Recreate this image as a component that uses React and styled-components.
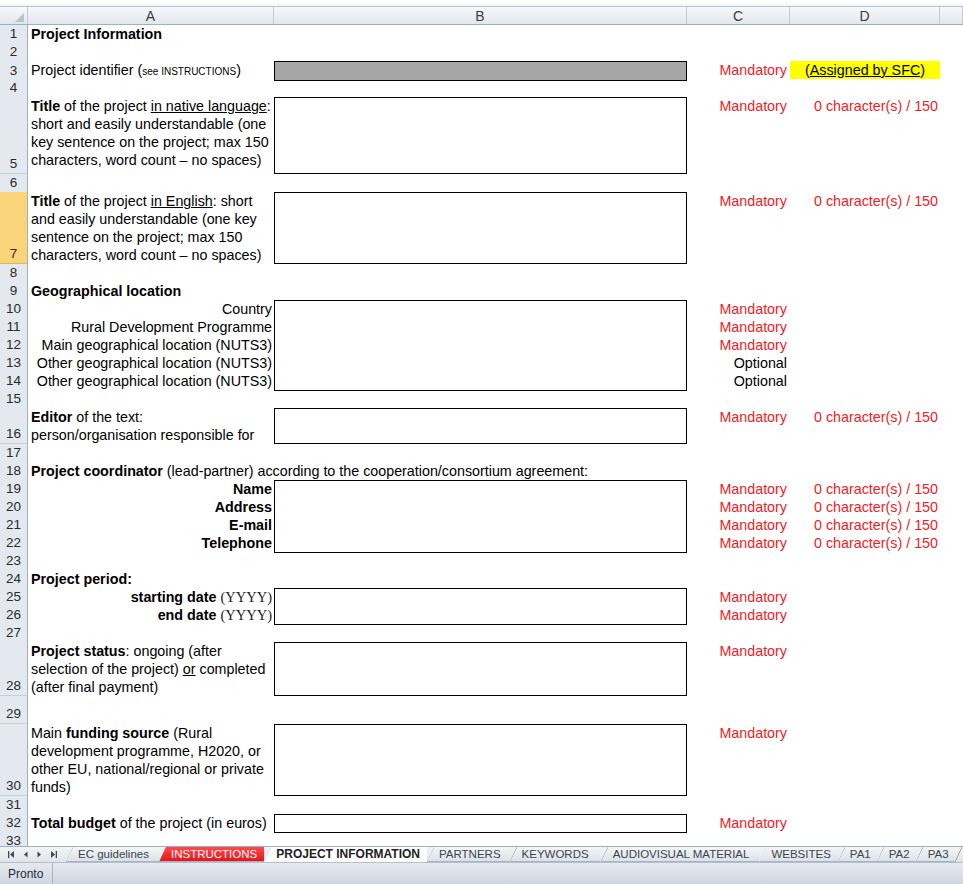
import React from "react";
import styled, { createGlobalStyle } from "styled-components";

const COLS = "28px 246px 413px 103px 150px 1fr";

const GlobalStyle = createGlobalStyle`
  *, *::before, *::after { box-sizing: border-box; }
  html, body { margin: 0; padding: 0; background: #fff; }
  body { font-family: "Liberation Sans", Arial, sans-serif; color: #000; }
`;

const Window = styled.div`
  width: 963px;
  height: 884px;
  display: flex;
  flex-direction: column;
  overflow: hidden;
  background: #fff;
`;

const FormulaEdge = styled.div`
  height: 7px;
  flex-shrink: 0;
  background: linear-gradient(#ffffff, #f3f4f6);
  border-top: 2px solid #fff;
  border-bottom: 1px solid #b9c3cf;
`;

const HeaderRow = styled.div`
  display: grid;
  grid-template-columns: ${COLS};
  height: 18px;
  flex-shrink: 0;
  background: linear-gradient(#f7f8fa, #e3e7ec);
  border-bottom: 1px solid #9eb0c4;
`;

const Corner = styled.div`
  display: flex;
  align-items: flex-end;
  justify-content: flex-end;
  padding: 0 3px 2px 0;
  border-right: 1px solid #c3cbd5;
`;

const ColLetter = styled.div`
  display: flex;
  align-items: center;
  justify-content: center;
  font-size: 14px;
  color: #3c3c3c;
  border-right: 1px solid #c3cbd5;
`;

const SheetBody = styled.div`
  flex: 1;
  overflow: hidden;
`;

const SheetRow = styled.div`
  display: grid;
  grid-template-columns: ${COLS};
  height: ${({ $h }) => $h}px;
`;

const RowNum = styled.div`
  display: flex;
  align-items: flex-end;
  justify-content: center;
  font-size: 13.5px;
  line-height: 18px;
  color: #2a2a2a;
  background: ${({ $selected }) => ($selected ? "#f9d47a" : "#e4e9ef")};
  border-right: 1px solid #9eb0c4;
  border-bottom: 1px solid ${({ $selected }) => ($selected ? "#e2b55a" : "#c6ced8")};
`;

const LabelCell = styled.div`
  font-size: 14.3px;
  line-height: 18px;
  white-space: nowrap;
  padding: 0 2px 0 3px;
  text-align: ${({ $align }) => $align || "left"};
`;

const Small = styled.span`
  font-size: 10px;
`;

const Serif = styled.span`
  font-family: "Liberation Serif", "Times New Roman", serif;
  font-size: 14.5px;
  color: #222;
`;

const Underline = styled.span`
  text-decoration: underline;
`;

const InputBox = styled.div`
  border: 1px solid #000;
  border-top: ${({ $joined }) => ($joined ? "none" : "1px solid #000")};
  background: ${({ $gray }) => ($gray ? "#a6a6a6" : "#fff")};
`;

const StatusCell = styled.div`
  font-size: 14.3px;
  line-height: 18px;
  text-align: right;
  padding-right: 3px;
  white-space: nowrap;
  color: ${({ $optional }) => ($optional ? "#000" : "#ee1c25")};
`;

const CountCell = styled.div`
  font-size: 14.3px;
  line-height: 18px;
  text-align: right;
  padding-right: 2px;
  white-space: nowrap;
  color: #ee1c25;
`;

const AssignedCell = styled.div`
  height: 18px;
  font-size: 14.3px;
  line-height: 18px;
  text-align: center;
  background: #ffff00;
  color: #000;
  white-space: nowrap;
`;

const TabBar = styled.div`
  display: flex;
  height: 16px;
  flex-shrink: 0;
  background: linear-gradient(#f2f4f7, #e1e5ea);
  border-top: 1px solid #9eb0c4;
`;

const NavGroup = styled.div`
  width: 66px;
  display: flex;
  align-items: center;
  padding-left: 4px;
`;

const NavButton = styled.div`
  width: 14px;
  display: flex;
  justify-content: center;
  align-items: center;
`;

const Tab = styled.div`
  display: flex;
  align-items: center;
  height: 15px;
  padding: 0 ${({ $gap }) => $gap || 8}px 0 12px;
  font-size: ${({ $active }) => ($active ? 12 : 11.5)}px;
  white-space: nowrap;
  font-weight: ${({ $active }) => ($active ? 700 : 400)};
  color: ${({ $red, $active }) => ($red ? "#fff" : $active ? "#222" : "#3b4450")};
  background:
    linear-gradient(to bottom right, transparent calc(50% - 0.7px), #8593a3 50%, transparent calc(50% + 0.7px)) 0 0 / 7px 100% no-repeat,
    ${({ $red, $active }) =>
      $red
        ? "linear-gradient(#ff4a4a, #e8141c)"
        : $active
        ? "#fff"
        : "linear-gradient(#f4f6f8, #dde2e8)"};
  clip-path: polygon(0 100%, 7px 0, 100% 0, 100% 100%);
  border-bottom: 1px solid ${({ $active }) => ($active ? "#fff" : "#a8b4c2")};
`;

const TabTail = styled.div`
  flex: 1;
  height: 15px;
  background: linear-gradient(to bottom right, transparent calc(50% - 0.7px), #8593a3 50%, transparent calc(50% + 0.7px)) 0 0 / 7px 100% no-repeat;
`;

const StatusBar = styled.div`
  height: 22px;
  flex-shrink: 0;
  display: flex;
  align-items: center;
  background: linear-gradient(#e6eaf0, #cfd6df);
  border-top: 1px solid #b3bfcc;
  font-size: 12px;
  color: #1f2a36;
`;

const StatusText = styled.div`
  padding: 0 9px 0 8px;
  height: 100%;
  display: flex;
  align-items: center;
  border-right: 1px solid #a9b5c3;
`;

const count = "0 character(s) / 150";

const rows = [
  { n: 1, a: <b>Project Information</b> },
  { n: 2 },
  {
    n: 3,
    a: (
      <>
        Project identifier (<Small>see INSTRUCTIONS</Small>)
      </>
    ),
    box: "gray",
    c: "Mandatory",
    assigned: true,
  },
  { n: 4 },
  {
    n: 5,
    h: 77,
    a: (
      <>
        <b>Title</b> of the project <Underline>in native language</Underline>:
        <br />
        short and easily understandable (one
        <br />
        key sentence on the project; max 150
        <br />
        characters, word count – no spaces)
      </>
    ),
    box: "white",
    c: "Mandatory",
    d: count,
  },
  { n: 6 },
  {
    n: 7,
    h: 72,
    selected: true,
    a: (
      <>
        <b>Title</b> of the project <Underline>in English</Underline>: short
        <br />
        and easily understandable (one key
        <br />
        sentence on the project; max 150
        <br />
        characters, word count – no spaces)
      </>
    ),
    box: "white",
    c: "Mandatory",
    d: count,
  },
  { n: 8 },
  { n: 9, a: <b>Geographical location</b> },
  { n: 10, a: "Country", align: "right", box: "white", c: "Mandatory" },
  { n: 11, a: "Rural Development Programme", align: "right", box: "white", joined: true, c: "Mandatory" },
  { n: 12, a: "Main geographical location (NUTS3)", align: "right", box: "white", joined: true, c: "Mandatory" },
  { n: 13, a: "Other geographical location (NUTS3)", align: "right", box: "white", joined: true, c: "Optional", optional: true },
  { n: 14, a: "Other geographical location (NUTS3)", align: "right", box: "white", joined: true, c: "Optional", optional: true },
  { n: 15 },
  {
    n: 16,
    h: 36,
    a: (
      <>
        <b>Editor</b> of the text:
        <br />
        person/organisation responsible for
      </>
    ),
    box: "white",
    c: "Mandatory",
    d: count,
  },
  { n: 17 },
  {
    n: 18,
    a: (
      <>
        <b>Project coordinator</b> (lead-partner) according to the cooperation/consortium agreement:
      </>
    ),
  },
  { n: 19, a: <b>Name</b>, align: "right", box: "white", c: "Mandatory", d: count },
  { n: 20, a: <b>Address</b>, align: "right", box: "white", joined: true, c: "Mandatory", d: count },
  { n: 21, a: <b>E-mail</b>, align: "right", box: "white", joined: true, c: "Mandatory", d: count },
  { n: 22, a: <b>Telephone</b>, align: "right", box: "white", joined: true, c: "Mandatory", d: count },
  { n: 23 },
  { n: 24, a: <b>Project period:</b> },
  {
    n: 25,
    a: (
      <>
        <b>starting date</b> <Serif>(YYYY)</Serif>
      </>
    ),
    align: "right",
    box: "white",
    c: "Mandatory",
  },
  {
    n: 26,
    a: (
      <>
        <b>end date</b> <Serif>(YYYY)</Serif>
      </>
    ),
    align: "right",
    box: "white",
    joined: true,
    c: "Mandatory",
  },
  { n: 27 },
  {
    n: 28,
    h: 54,
    a: (
      <>
        <b>Project status</b>: ongoing (after
        <br />
        selection of the project) <Underline>or</Underline> completed
        <br />
        (after final payment)
      </>
    ),
    box: "white",
    c: "Mandatory",
  },
  { n: 29, h: 28 },
  {
    n: 30,
    h: 72,
    a: (
      <>
        Main <b>funding source</b> (Rural
        <br />
        development programme, H2020, or
        <br />
        other EU, national/regional or private
        <br />
        funds)
      </>
    ),
    box: "white",
    c: "Mandatory",
  },
  { n: 31 },
  {
    n: 32,
    a: (
      <>
        <b>Total budget</b> of the project (in euros)
      </>
    ),
    box: "white",
    c: "Mandatory",
  },
  { n: 33 },
];

const tabs = [
  { label: "EC guidelines", gap: 10 },
  { label: "INSTRUCTIONS", red: true, gap: 7 },
  { label: "PROJECT INFORMATION", active: true, gap: 7 },
  { label: "PARTNERS", gap: 9 },
  { label: "KEYWORDS", gap: 12 },
  { label: "AUDIOVISUAL MATERIAL", gap: 10 },
  { label: "WEBSITES", gap: 7 },
  { label: "PA1", gap: 6 },
  { label: "PA2", gap: 6 },
  { label: "PA3", gap: 6 },
];

const NavIcon = ({ dir, bar }) => (
  <svg width="9" height="9" viewBox="0 0 9 9">
    {dir === "left" ? (
      <>
        {bar && <rect x="1" y="1" width="1.3" height="7" fill="#3d4a5a" />}
        <path d={bar ? "M7 1 L3 4.5 L7 8 Z" : "M6.5 1.5 L3 4.5 L6.5 7.5 Z"} fill="#3d4a5a" />
      </>
    ) : (
      <>
        {bar && <rect x="6.7" y="1" width="1.3" height="7" fill="#3d4a5a" />}
        <path d={bar ? "M2 1 L6 4.5 L2 8 Z" : "M2.5 1.5 L6 4.5 L2.5 7.5 Z"} fill="#3d4a5a" />
      </>
    )}
  </svg>
);

const App = () => (
  <>
    <GlobalStyle />
    <Window>
      <FormulaEdge />
      <HeaderRow>
        <Corner>
          <svg width="9" height="9" viewBox="0 0 9 9">
            <path d="M9 0 L9 9 L0 9 Z" fill="#b9c2cd" />
          </svg>
        </Corner>
        <ColLetter>A</ColLetter>
        <ColLetter>B</ColLetter>
        <ColLetter>C</ColLetter>
        <ColLetter>D</ColLetter>
        <ColLetter />
      </HeaderRow>
      <SheetBody>
        {rows.map((r) => (
          <SheetRow key={r.n} $h={r.h || 18}>
            <RowNum $selected={r.selected}>{r.n}</RowNum>
            <LabelCell $align={r.align}>{r.a}</LabelCell>
            {r.box ? <InputBox $gray={r.box === "gray"} $joined={r.joined} /> : <div />}
            <StatusCell $optional={r.optional}>{r.c}</StatusCell>
            {r.assigned ? (
              <AssignedCell>
                (<Underline>Assigned by SFC</Underline>)
              </AssignedCell>
            ) : (
              <CountCell>{r.d}</CountCell>
            )}
            <div />
          </SheetRow>
        ))}
      </SheetBody>
      <TabBar>
        <NavGroup>
          <NavButton>
            <NavIcon dir="left" bar />
          </NavButton>
          <NavButton>
            <NavIcon dir="left" />
          </NavButton>
          <NavButton>
            <NavIcon dir="right" />
          </NavButton>
          <NavButton>
            <NavIcon dir="right" bar />
          </NavButton>
        </NavGroup>
        {tabs.map((t) => (
          <Tab key={t.label} $red={t.red} $active={t.active} $gap={t.gap}>
            {t.label}
          </Tab>
        ))}
        <TabTail />
      </TabBar>
      <StatusBar>
        <StatusText>Pronto</StatusText>
      </StatusBar>
    </Window>
  </>
);

export default App;
